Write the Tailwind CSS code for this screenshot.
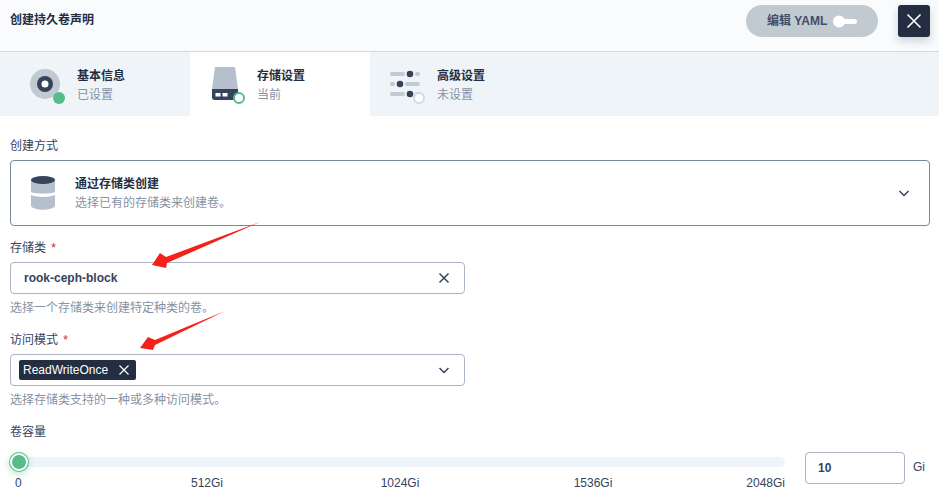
<!DOCTYPE html>
<html lang="zh-CN">
<head>
<meta charset="utf-8">
<script src="https://cdn.jsdelivr.net/npm/@tailwindcss/browser@4"></script>
</head>
<body class="m-0 h-[502px] w-[939px] overflow-hidden bg-white font-['Liberation_Sans','Noto_Sans_CJK_SC',sans-serif] text-[12px] text-[#36435c]">
<div class="relative h-[502px] w-[939px] overflow-hidden">
  <header class="flex h-[52px] items-start justify-between border-b border-[#d1d9e2] bg-[#f9fbfd]">
    <div class="pl-[10px] pt-[11px] text-[12px] leading-[18px] font-bold text-[#242e42]">创建持久卷声明</div>
    <div class="flex items-start pt-[5px] pr-[9px]">
      <div class="flex h-[32px] w-[132px] items-center rounded-[16px] bg-[#c1c9d1] pl-[21px] font-bold text-[#404e68]">
        <span class="leading-[16px]">编辑 YAML</span>
        <svg class="ml-[6px]" width="24" height="14" viewBox="0 0 24 14"><rect x="6" y="5" width="18" height="5" rx="2.5" fill="#fff"/><circle cx="6" cy="7.5" r="6" fill="#fff"/></svg>
      </div>
      <div class="ml-[20px] flex h-[32px] w-[32px] items-center justify-center rounded-[3px] bg-[#242e42] shadow-[0_4px_8px_rgba(36,46,66,0.2)]">
        <svg width="16" height="16" viewBox="0 0 16 16" fill="none" stroke="#fff" stroke-width="1.6"><path d="M1.5 1.5 14.5 14.5M14.5 1.5 1.5 14.5"/></svg>
      </div>
    </div>
  </header>

  <nav class="flex h-[64px] bg-[#eff4f9]">
    <div class="flex w-[190px] items-start pl-[30px] pt-[17px]">
      <svg width="36" height="36" viewBox="0 0 36 36" class="shrink-0">
        <circle cx="15" cy="15" r="15" fill="#c1c9d1"/>
        <circle cx="15" cy="15" r="8" fill="#36435c"/>
        <circle cx="15" cy="15" r="3.500" fill="#fff"/>
        <circle cx="29" cy="29" r="6" fill="#55bc8a"/>
      </svg>
      <div class="ml-[11px] -mt-[3px]">
        <div class="leading-[20px] font-bold text-[#242e42]">基本信息</div>
        <div class="-mt-[1px] leading-[20px] text-[#8692a5]">已设置</div>
      </div>
    </div>
    <div class="flex w-[180px] items-start bg-white pl-[21px] pt-[15px]">
      <svg width="36" height="38" viewBox="0 0 36 38" class="shrink-0">
        <path d="M4 0H24L27 22H1Z" fill="#b6c0cc"/>
        <path d="M1 22H27V30.500Q27 33 24 33H4Q1 33 1 30.500Z" fill="#36435c"/>
        <rect x="4.500" y="26" width="5" height="3.500" fill="#fff"/>
        <rect x="11.500" y="26" width="5" height="3.500" fill="#fff"/>
        <circle cx="28" cy="31" r="5" fill="#fff" stroke="#55bc8a" stroke-width="2"/>
      </svg>
      <div class="ml-[10px] -mt-[1px]">
        <div class="leading-[20px] font-bold text-[#242e42]">存储设置</div>
        <div class="-mt-[1px] leading-[20px] text-[#8692a5]">当前</div>
      </div>
    </div>
    <div class="flex flex-1 items-start pl-[20px] pt-[18px]">
      <svg width="36" height="36" viewBox="0 0 36 36" class="shrink-0">
        <g stroke="#c1c9d1" stroke-width="4" stroke-linecap="round" fill="none">
          <path d="M2 4H13M27 4H28M2 14H3M17 14H28M2 24H13M27 24H28"/>
        </g>
        <circle cx="20" cy="4" r="3.300" fill="#36435c"/>
        <circle cx="10" cy="14" r="3.300" fill="#36435c"/>
        <circle cx="20" cy="24" r="3.300" fill="#36435c"/>
        <circle cx="29" cy="28" r="5" fill="#fff" stroke="#d1d9e2" stroke-width="2"/>
      </svg>
      <div class="ml-[11px] -mt-[4px]">
        <div class="leading-[20px] font-bold text-[#242e42]">高级设置</div>
        <div class="-mt-[1px] leading-[20px] text-[#8692a5]">未设置</div>
      </div>
    </div>
  </nav>

  <main class="px-[10px] pt-[21px]">
    <div class="leading-[18px]">创建方式</div>
    <div class="mt-[5px] flex h-[66px] w-[920px] items-center rounded-[4px] border border-[#79879c] bg-white pl-[20px] pr-[19px]">
      <svg width="24" height="34" viewBox="0 0 24 34" class="shrink-0">
        <path d="M0 4V16C3 18 21 18 24 16V4Z" fill="#b6c0cc"/>
        <path d="M0 19C5 21.500 19 21.500 24 19V30C21 35 3 35 0 30Z" fill="#b6c0cc"/>
        <ellipse cx="12" cy="4" rx="12" ry="4" fill="#36435c"/>
      </svg>
      <div class="ml-[20px] flex-1">
        <div class="leading-[20px] font-bold text-[#242e42]">通过存储类创建</div>
        <div class="leading-[18px] text-[#8692a5]">选择已有的存储类来创建卷。</div>
      </div>
      <svg width="12" height="12" viewBox="0 0 12 12" fill="none" stroke="#36435c" stroke-width="1.500"><path d="M1.500 4 6 8.500 10.500 4"/></svg>
    </div>

    <div class="mt-[13px] leading-[18px]">存储类 <span class="ml-[2px] text-[#ca2621]">*</span></div>
    <div class="mt-[5px] flex h-[32px] w-[455px] items-center justify-between rounded-[4px] border border-[#abb4c4] bg-white pl-[13px] pr-[14px]">
      <span class="font-bold">rook-ceph-block</span>
      <svg width="12" height="12" viewBox="0 0 12 12" fill="none" stroke="#36435c" stroke-width="1.500"><path d="M1.500 1.500 10.500 10.500M10.500 1.500 1.500 10.500"/></svg>
    </div>
    <div class="mt-[5px] leading-[18px] text-[#8692a5]">选择一个存储类来创建特定种类的卷。</div>

    <div class="mt-[14px] leading-[18px]">访问模式 <span class="ml-[2px] text-[#ca2621]">*</span></div>
    <div class="mt-[5px] flex h-[32px] w-[455px] items-center justify-between rounded-[4px] border border-[#abb4c4] bg-white pl-[8px] pr-[14px]">
      <span class="flex h-[20px] w-[117px] items-center justify-between rounded-[2px] bg-[#242e42] pl-[4px] pr-[7px] text-white">ReadWriteOnce
        <svg width="10" height="10" viewBox="0 0 10 10" fill="none" stroke="#fff" stroke-width="1.200"><path d="M.5.5 9.500 9.500M9.500.5.500 9.500"/></svg>
      </span>
      <svg width="12" height="12" viewBox="0 0 12 12" fill="none" stroke="#36435c" stroke-width="1.500"><path d="M1.500 4 6 8.500 10.500 4"/></svg>
    </div>
    <div class="mt-[5px] leading-[18px] text-[#8692a5]">选择存储类支持的一种或多种访问模式。</div>

    <div class="mt-[14px] leading-[18px]">卷容量</div>
    <div class="mt-[11px] flex items-start">
      <div class="w-[775px]">
        <div class="relative mt-[5px] h-[10px] rounded-[5px] bg-[#eff4f9]">
          <div class="absolute left-0 -top-[4px] h-[18px] w-[18px] rounded-full border-2 border-white bg-[#55bc8a] ring-1 ring-[#55bc8a] shadow-[0_2px_8px_rgba(85,188,138,0.5)]"></div>
        </div>
        <div class="mt-[8px] flex pl-[5px] leading-[16px]">
          <span class="w-[95.5px]">0</span>
          <span class="w-[193px] text-center">512Gi</span>
          <span class="w-[193px] text-center">1024Gi</span>
          <span class="w-[193px] text-center">1536Gi</span>
          <span class="flex-1 text-right">2048Gi</span>
        </div>
      </div>
      <div class="ml-[20px] flex h-[32px] w-[100px] items-center rounded-[4px] border border-[#abb4c4] bg-white pl-[12px] font-bold">10</div>
      <div class="ml-[8px] mt-[7px] leading-[16px]">Gi</div>
    </div>
  </main>

  <svg class="absolute left-0 top-0" width="939" height="502" viewBox="0 0 939 502" fill="#f5201a">
    <path d="M260 222 166 257 160 253 152 265 166 268 167 263Z"/>
    <path d="M225 311 155 340 148 337 140 348 153 350 155 345Z"/>
  </svg>
</div>
</body>
</html>
